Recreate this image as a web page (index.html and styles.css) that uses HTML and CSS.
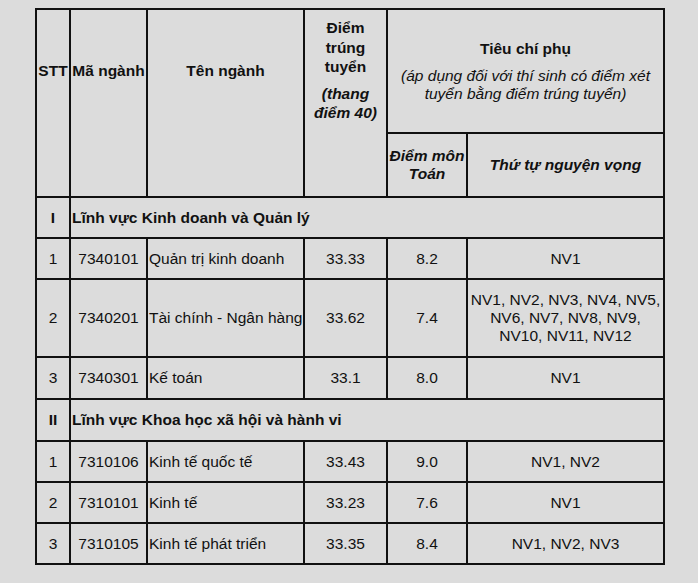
FILE: index.html
```html
<!DOCTYPE html>
<html lang="vi">
<head>
<meta charset="utf-8">
<link rel="stylesheet" href="styles.css">
</head>
<body>
<table class="tbl">
  <colgroup>
    <col class="c-stt">
    <col class="c-ma">
    <col class="c-ten">
    <col class="c-diem">
    <col class="c-toan">
    <col class="c-nv">
  </colgroup>
  <tr class="h-top">
    <th rowspan="2" class="tight top-head">STT</th>
    <th rowspan="2" class="tight top-head">Mã ngành</th>
    <th rowspan="2" class="top-head">Tên ngành</th>
    <th rowspan="2" class="diem-head">
      <div>Điểm trúng tuyển</div>
      <div class="it sub">(thang điểm 40)</div>
    </th>
    <th colspan="2" class="tieuchi">
      <div>Tiêu chí phụ</div>
      <div class="it normal sub">(áp dụng đối với thí sinh có điểm xét tuyển bằng điểm trúng tuyển)</div>
    </th>
  </tr>
  <tr class="h-sub">
    <th class="it tight">Điểm môn Toán</th>
    <th class="it">Thứ tự nguyện vọng</th>
  </tr>
  <tr class="sec">
    <td class="b">I</td>
    <td colspan="5" class="b left">Lĩnh vực Kinh doanh và Quản lý</td>
  </tr>
  <tr>
    <td>1</td><td>7340101</td><td class="left">Quản trị kinh doanh</td><td>33.33</td><td>8.2</td><td>NV1</td>
  </tr>
  <tr class="tall">
    <td>2</td><td>7340201</td><td class="left">Tài chính - Ngân hàng</td><td>33.62</td><td>7.4</td><td class="nvlist">NV1, NV2, NV3, NV4, NV5, NV6, NV7, NV8, NV9, NV10, NV11, NV12</td>
  </tr>
  <tr class="r42">
    <td>3</td><td>7340301</td><td class="left">Kế toán</td><td>33.1</td><td>8.0</td><td>NV1</td>
  </tr>
  <tr class="sec r42">
    <td class="b">II</td>
    <td colspan="5" class="b left">Lĩnh vực Khoa học xã hội và hành vi</td>
  </tr>
  <tr>
    <td>1</td><td>7310106</td><td class="left">Kinh tế quốc tế</td><td>33.43</td><td>9.0</td><td>NV1, NV2</td>
  </tr>
  <tr>
    <td>2</td><td>7310101</td><td class="left">Kinh tế</td><td>33.23</td><td>7.6</td><td>NV1</td>
  </tr>
  <tr>
    <td>3</td><td>7310105</td><td class="left">Kinh tế phát triển</td><td>33.35</td><td>8.4</td><td>NV1, NV2, NV3</td>
  </tr>
</table>
</body>
</html>
```

FILE: styles.css
```css
html, body {
  margin: 0;
  padding: 0;
  background: #dcdcdc;
}
body {
  font-family: "Liberation Sans", Arial, sans-serif;
  font-size: 15.5px;
  color: #111;
  padding: 8px 0 0 35px;
}
.tbl {
  border-collapse: collapse;
  table-layout: fixed;
  width: 629px;
  border: 2px solid #111;
}
.c-stt { width: 34px; }
.c-ma { width: 77px; }
.c-ten { width: 157px; }
.c-diem { width: 83px; }
.c-toan { width: 80px; }
.c-nv { width: 197px; }

.tbl th, .tbl td {
  border: 2px solid #111;
  padding: 0 2px;
  text-align: center;
  vertical-align: middle;
  line-height: 18px;
}
.tbl th { font-weight: bold; }
.tbl th.tight, .tbl td.tight { padding: 0; }
.tbl tr { height: 41px; }
.tbl tr.r42 { height: 42px; }
.tbl tr.h-top { height: 124px; }
.tbl tr.h-sub { height: 64px; }
.tbl tr.tall { height: 78px; }
.tbl th.top-head {
  vertical-align: top;
  padding-top: 52px;
}
.tbl .left { text-align: left; padding-left: 1px; padding-right: 0; }
.b { font-weight: bold; }
.it { font-style: italic; }
.normal { font-weight: normal; }
.sub { margin-top: 9px; }
.tbl th.diem-head {
  vertical-align: top;
  padding: 8px 4px 0;
  line-height: 19.5px;
}
.diem-head .sub { margin-top: 7px; }
.tbl th.tieuchi { padding: 0 6px; }
.tbl td.nvlist { padding: 0; }
```
